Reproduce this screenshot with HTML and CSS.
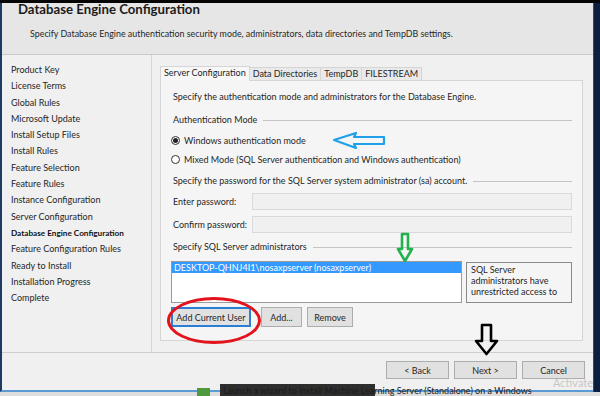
FILE: index.html
```html
<!DOCTYPE html>
<html lang="en">
<head>
  <meta charset="UTF-8" />
  <title>Database Engine Configuration</title>
  <link rel="stylesheet" href="styles.css">
</head>
<body>

<div class="screen">
  <div class="topbar"></div>

  <div class="row">
    <div class="window">
      <header class="wiz-head">
        <h1>Database Engine Configuration</h1>
        <p>Specify Database Engine authentication security mode, administrators, data directories and TempDB settings.</p>
      </header>

      <div class="wiz-body">
        <nav class="steps">
          <div>Product Key</div>
          <div>License Terms</div>
          <div>Global Rules</div>
          <div>Microsoft Update</div>
          <div>Install Setup Files</div>
          <div>Install Rules</div>
          <div>Feature Selection</div>
          <div>Feature Rules</div>
          <div>Instance Configuration</div>
          <div>Server Configuration</div>
          <div class="current">Database Engine Configuration</div>
          <div>Feature Configuration Rules</div>
          <div>Ready to Install</div>
          <div>Installation Progress</div>
          <div>Complete</div>
        </nav>

        <section class="page">
          <div class="tabs">
            <div class="tab active">Server Configuration</div>
            <div class="tab">Data Directories</div>
            <div class="tab">TempDB</div>
            <div class="tab">FILESTREAM</div>
          </div>

          <div class="panel">
            <div class="desc">Specify the authentication mode and administrators for the Database Engine.</div>

            <div class="group g-auth"><span>Authentication Mode</span><i></i></div>
            <label class="radio r1"><span class="dot checked"></span>Windows authentication mode</label>
            <label class="radio r2"><span class="dot"></span>Mixed Mode (SQL Server authentication and Windows authentication)</label>

            <div class="group g-pass"><span>Specify the password for the SQL Server system administrator (sa) account.</span><i></i></div>
            <div class="field f1"><span>Enter password:</span><div class="input"></div></div>
            <div class="field f2"><span>Confirm password:</span><div class="input"></div></div>

            <div class="group g-admin"><span>Specify SQL Server administrators</span><i></i></div>
            <div class="admins">
              <div class="list">
                <div class="item selected">DESKTOP-QHNJ4I1\nosaxpserver (nosaxpserver)</div>
              </div>
              <div class="note">SQL Server administrators have unrestricted access to</div>
            </div>
            <div class="actions">
              <button class="btn focus">Add Current User</button>
              <button class="btn b-add">Add...</button>
              <button class="btn b-remove">Remove</button>
            </div>
          </div>
        </section>
      </div>

      <footer class="wiz-foot">
        <button class="btn nav">&lt; Back</button>
        <button class="btn nav">Next &gt;</button>
        <button class="btn nav">Cancel</button>
      </footer>
    </div>
    <div class="desktop"></div>
  </div>

  <div class="taskbar"></div>

  <!-- annotations drawn over the screenshot -->
  <svg class="mark arrow-blue" width="56" height="20" viewBox="0 0 56 20">
    <polygon points="2,9 24,2 22,6 52,6 52,13 22,13 24,17" fill="none" stroke="#1ea0ea" stroke-width="2.2" stroke-linejoin="round"/>
  </svg>
  <svg class="mark arrow-green" width="18" height="32" viewBox="0 0 18 32">
    <polygon points="6,2 12,2 12,17 16,17 9,29 2,17 6,17" fill="none" stroke="#23b14d" stroke-width="2.6" stroke-linejoin="round"/>
  </svg>
  <svg class="mark arrow-black" width="26" height="34" viewBox="0 0 26 34">
    <polygon points="8,2 17,2 17,18 23,18 12.5,31 2,18 8,18" fill="none" stroke="#000" stroke-width="2.6" stroke-linejoin="round"/>
  </svg>
  <div class="mark ring"></div>

  <div class="tooltip"><span class="tip-icon"></span><span class="tip-text">Launch a wizard to install Machine Learning Server (Standalone) on a Windows</span></div>
  <div class="watermark">Activate</div>
</div>

</body>
</html>
```

FILE: styles.css
```css
:root {
  --bg: #f0f0f0;
  --text: #262626;
  --line: #d5d5d5;
  --btn-bg: #e1e1e1;
  --btn-border: #adadad;
}

* {
  box-sizing: border-box;
}

body {
  margin: 0;
  font-family: Lato, 'Open Sans', sans-serif;
  font-size: 9px;
  color: var(--text);
  background: #000;
}

.screen {
  position: relative;
  width: 600px;
  height: 396px;
  display: flex;
  flex-direction: column;
  overflow: hidden;
}

.topbar {
  height: 3px;
  background: #050505;
}

.row {
  display: flex;
  height: 389px;
}

.window {
  flex: 1;
  display: flex;
  flex-direction: column;
  background: var(--bg);
  border-left: 2px solid #1d3a63;
  border-bottom: 2px solid #5b9bd5;
}

.desktop {
  width: 7px;
  background: #0c1f3f;
  border-left: 1px solid #2c4d7a;
}

.taskbar {
  height: 4px;
  background: #dedede;
}

/* header */
.wiz-head {
  height: 52px;
  background: #e6e6e6;
  border-bottom: 1px solid #c9c9c9;
  padding-left: 16px;
}

.wiz-head h1 {
  margin: 0;
  font-size: 13.2px;
  line-height: 13px;
  font-weight: 700;
  color: #1b1b1b;
}

.wiz-head p {
  margin: 12px 0 0 12px;
  font-size: 8.9px;
  line-height: 12px;
}

/* body */
.wiz-body {
  height: 297px;
  display: flex;
}

.steps {
  width: 150px;
  border-right: 1px solid var(--line);
  padding: 7px 0 0 9px;
  line-height: 16.3px;
}

.steps .current {
  font-weight: 700;
  font-size: 8.2px;
  color: #111;
}

.page {
  flex: 1;
  padding: 11px 10px 11px 8px;
  display: flex;
  flex-direction: column;
}

.tabs {
  display: flex;
  height: 14px;
  align-items: flex-end;
}

.tab {
  height: 13px;
  line-height: 12px;
  padding: 0 3px;
  background: #e9e9e9;
  border: 1px solid var(--line);
  border-bottom: none;
  margin-right: -1px;
}

.tab.active {
  background: #f7f7f7;
  position: relative;
  z-index: 1;
  margin-bottom: -1px;
  height: 15px;
}

.panel {
  flex: 1;
  background: #f5f5f5;
  border: 1px solid var(--line);
  padding: 0 10px 0 12px;
  display: flex;
  flex-direction: column;
}

.desc {
  margin-top: 10px;
  line-height: 12px;
}

.group {
  display: flex;
  align-items: center;
  line-height: 12px;
}

.group i {
  flex: 1;
  border-top: 1px solid #c4c4c4;
  margin-left: 6px;
}

.g-auth { margin-top: 11px; }
.g-pass { margin-top: 9px; }
.g-admin { margin-top: 8px; }

.radio {
  display: flex;
  align-items: center;
  height: 14px;
  margin-left: -2px;
}

.r1 { margin-top: 7px; }
.r2 { margin-top: 5px; }

.dot {
  width: 9px;
  height: 9px;
  border: 1px solid #333;
  border-radius: 50%;
  background: #fff;
  margin-right: 4px;
  display: flex;
  align-items: center;
  justify-content: center;
}

.dot.checked::after {
  content: "";
  width: 5px;
  height: 5px;
  border-radius: 50%;
  background: #222;
}

.field {
  display: flex;
  align-items: center;
  height: 17px;
}

.f1 { margin-top: 6px; }
.f2 { margin-top: 6px; }

.field span {
  width: 79px;
}

.input {
  flex: 1;
  height: 17px;
  background: #f0f0f0;
  border: 1px solid #d9d9d9;
}

.admins {
  display: flex;
  height: 42px;
  margin-top: 8px;
  margin-left: -2px;
}

.list {
  width: 291px;
  background: #fff;
  border: 1px solid #9a9a9a;
}

.item {
  height: 11px;
  line-height: 11px;
  padding-left: 2px;
}

.item.selected {
  background: #3399ff;
  color: #fff;
}

.note {
  flex: 1;
  margin-left: 4px;
  margin-top: 1px;
  border: 1px solid #8a8a8a;
  padding: 1px 4px;
  line-height: 11px;
}

.actions {
  display: flex;
  margin-top: 4px;
  margin-left: -2px;
}

.btn {
  font-family: inherit;
  font-size: 9px;
  color: var(--text);
  background: var(--btn-bg);
  border: 1px solid var(--btn-border);
  padding: 0;
  height: 20px;
}

.btn.focus {
  width: 80px;
  border: 2px solid #2a7fd4;
}

.b-add {
  width: 41px;
  margin-left: 10px;
}

.b-remove {
  width: 46px;
  margin-left: 5px;
}

/* footer */
.wiz-foot {
  flex: 1;
  border-top: 1px solid #cfcfcf;
  display: flex;
  justify-content: flex-end;
  align-items: flex-start;
  padding: 8px 8px 0 0;
  gap: 5px;
}

.btn.nav {
  width: 63px;
  height: 18px;
}

/* annotations */
.mark {
  position: absolute;
}

.arrow-blue { left: 332px; top: 131px; }
.arrow-green { left: 396px; top: 232px; }
.arrow-black { left: 474px; top: 323px; }

.ring {
  left: 167px;
  top: 297px;
  width: 94px;
  height: 47px;
  border: 3px solid #e3121b;
  border-radius: 50%;
}

.tooltip {
  position: absolute;
  left: 197px;
  top: 384px;
  display: flex;
  align-items: flex-start;
  white-space: nowrap;
}

.tip-icon {
  width: 13px;
  height: 8px;
  margin-top: 4px;
  margin-right: 10px;
  background: #4f9a3e;
}

.tip-text {
  padding-left: 3px;
  line-height: 14px;
  font-size: 9px;
  color: #1a1a1a;
  background: linear-gradient(to right, #2e2e2e 155px, transparent 155px);
}

.watermark {
  position: absolute;
  left: 553px;
  top: 376px;
  font-size: 11px;
  color: rgba(190, 190, 190, 0.85);
  white-space: nowrap;
}
```
